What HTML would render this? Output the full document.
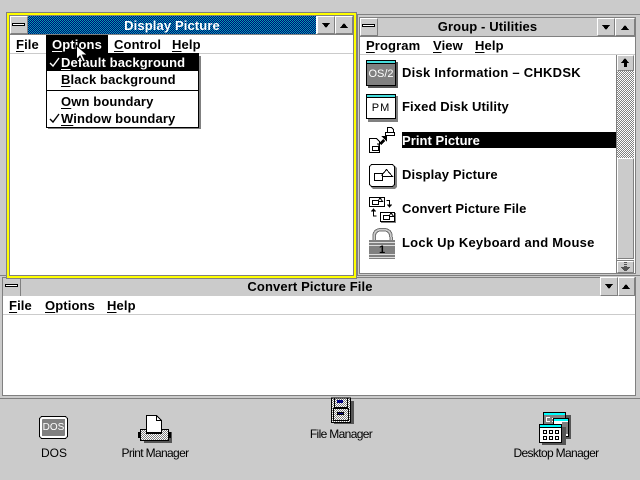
<!DOCTYPE html>
<html><head><meta charset="utf-8"><style>
html,body{margin:0;padding:0;background:#cbcbcb;width:640px;height:480px;overflow:hidden}
body{position:relative;font-family:"Liberation Sans",sans-serif}
.r{position:absolute}
.t{position:absolute;font:bold 13px/16px "Liberation Sans",sans-serif;letter-spacing:.12px;color:#000;white-space:pre;margin-top:1px}
.t u{text-underline-offset:2px;text-decoration-thickness:1px}
.l{position:absolute;font:12px/14px "Liberation Sans",sans-serif;letter-spacing:-.65px;color:#000;white-space:pre;text-align:center}
.btn{position:absolute;background:#cbcbcb;border-top:1px solid #fff;border-left:1px solid #fff;border-right:1px solid #808080;border-bottom:1px solid #808080;box-sizing:border-box}
svg{position:absolute;overflow:visible;shape-rendering:crispEdges}
.st{background:repeating-conic-gradient(#808080 0 25%,#fff 0 50%) 0 0/2px 2px}
</style></head><body>

<!-- Group window -->
<div class="r" style="left:357px;top:14px;width:285px;height:262px;background:#cbcbcb;border:1px solid #808080;box-sizing:border-box"></div>
<div class="r" style="left:359px;top:17px;width:277px;height:257px;background:#808080"></div>
<div class="r" style="left:360px;top:18px;width:275px;height:255px;background:#fff"></div>
<div class="r" style="left:360px;top:18px;width:275px;height:18px;background:#cbcbcb"></div>
<div class="btn" style="left:360px;top:18px;width:18px;height:18px"></div>
<div class="r" style="left:362px;top:24px;width:13px;height:3px;background:#fff;border:1px solid #000;box-sizing:border-box"></div>
<div class="t" style="left:378px;top:18px;width:219px;text-align:center;color:#000">Group - Utilities</div>
<div class="btn" style="left:597px;top:18px;width:18px;height:18px"></div>
<svg style="left:602px;top:25px" width="9" height="5"><path d="M0 0h8l-4 5z"/></svg>
<div class="btn" style="left:615px;top:18px;width:20px;height:18px"></div>
<svg style="left:621px;top:25px" width="9" height="5"><path d="M4 0l4 5H0z"/></svg>
<div class="r" style="left:360px;top:36px;width:275px;height:1px;background:#808080"></div>
<div class="r" style="left:360px;top:54px;width:275px;height:1px;background:#cbcbcb"></div>
<div class="t" style="left:366px;top:37px"><u>P</u>rogram</div>
<div class="t" style="left:433px;top:37px"><u>V</u>iew</div>
<div class="t" style="left:475px;top:37px"><u>H</u>elp</div>

<!-- Scrollbar -->
<div class="r" style="left:616px;top:55px;width:1px;height:218px;background:#808080"></div>
<div class="btn" style="left:617px;top:55px;width:17px;height:16px"></div>
<svg style="left:621px;top:58px" width="9" height="10"><path d="M4 0l4 5H6v4H3V5H0z"/></svg>
<div class="r st" style="left:617px;top:71px;width:17px;height:87px"></div>
<div class="btn" style="left:617px;top:158px;width:17px;height:101px"></div>
<div class="r" style="left:617px;top:260px;width:17px;height:1px;background:#808080"></div>
<div class="btn" style="left:617px;top:261px;width:17px;height:12px"></div>
<svg style="left:621px;top:262px" width="9" height="10"><path d="M3 0h3v1H3zM3 2h3v1H3zM3 4h3v1H3zM0 5h9v1H0zM1 6h7v1H1zM2 7h5v1H2zM3 8h3v1H3z" fill="#555"/></svg>

<!-- Program icons -->
<svg style="left:366px;top:60px" width="32" height="28">
<rect x="2" y="2" width="30" height="26" fill="#555"/>
<rect x="0" y="0" width="30" height="26" fill="#000"/><rect x="1" y="1" width="28" height="24" fill="#808080"/>
<rect x="1" y="1" width="28" height="2" fill="#44dddd"/><rect x="1" y="3" width="28" height="1" fill="#000"/>
</svg>
<div class="r" style="left:366px;top:67px;width:30px;text-align:center;font:11px/14px 'Liberation Sans',sans-serif;color:#fff">OS/2</div>
<svg style="left:366px;top:94px" width="32" height="28">
<rect x="2" y="2" width="30" height="26" fill="#808080"/>
<rect x="0" y="0" width="30" height="25" fill="#000"/><rect x="1" y="1" width="28" height="23" fill="#fff"/>
<rect x="1" y="1" width="28" height="2" fill="#44dddd"/><rect x="1" y="3" width="28" height="1" fill="#000"/>
</svg>
<div class="r" style="left:366px;top:101px;width:30px;text-align:center;font:11px/14px 'Liberation Sans',sans-serif;color:#000;letter-spacing:1px">PM</div>

<!-- Print Picture icon -->
<svg style="left:368px;top:126px" width="32" height="32">
<path d="M19.500 1.500h4l2 2v5h-6z" fill="#fff" stroke="#000"/>
<path d="M17.500 6.500h9v3h-9z" fill="#fff" stroke="#000"/>
<path d="M11 17l4-4 2 2-4 4zM13 10h6v6z" fill="#000"/>
<path d="M1.500 12.500h7l3 3v11h-10z" fill="#fff" stroke="#000"/>
<path d="M4.500 20.500h6v4h-6zM9 18h2v3" fill="#fff" stroke="#000"/>
</svg>
<!-- Display Picture icon -->
<svg style="left:369px;top:164px" width="30" height="27" shape-rendering="auto">
<rect x="2" y="2" width="26" height="23" rx="3" fill="#808080"/>
<rect x=".5" y=".5" width="25" height="22" rx="3" fill="#fff" stroke="#000"/>
<rect x="5.500" y="9.500" width="8" height="7" fill="#fff" stroke="#000"/>
<path d="M13.500 12.500h10l-6-7-5 6" fill="none" stroke="#000"/>
</svg>
<!-- Convert icon -->
<svg style="left:369px;top:197px" width="30" height="26">
<rect x=".5" y=".5" width="15" height="9" fill="#fff" stroke="#000"/>
<rect x="3.500" y="3.500" width="6" height="4" fill="#fff" stroke="#000"/><path d="M9.500 4.500h4l-2-3h-1l-1 2" fill="none" stroke="#000"/>
<rect x="11.500" y="15.500" width="14" height="9" fill="#fff" stroke="#000"/>
<rect x="14.500" y="18.500" width="6" height="4" fill="#fff" stroke="#000"/><path d="M20.500 19.500h4l-2-3h-1l-1 2" fill="none" stroke="#000"/>
<rect x="26" y="16" width="1" height="10" fill="#808080"/><rect x="12" y="25" width="15" height="1" fill="#808080"/>
<path d="M17.500 3.500h3v6M18 8h5M19 9h3M20 10h1M4.500 13v6h3M2 14h5M3 13h3M4 12h1" fill="none" stroke="#000"/>
</svg>
<!-- Lock icon -->
<svg style="left:369px;top:228px" width="28" height="32" shape-rendering="auto">
<path d="M5 13V9q0-7.500 8.500-7.500T22 9v4" fill="none" stroke="#000" stroke-width="3.500" opacity=".55"/>
<path d="M5 13V9q0-7.500 8.500-7.500T22 9v4" fill="none" stroke="#cbcbcb" stroke-width="1.500"/>
<rect x="0" y="12" width="26" height="19" fill="#808080"/>
<path d="M0 14.500h26M0 17.500h26M0 26.500h26M0 29.500h26" stroke="#ddd" stroke-width="1" fill="none"/>
<text x="13" y="25" font-family="Liberation Sans" font-weight="bold" font-size="11" text-anchor="middle">1</text>
</svg>

<div class="t" style="left:402px;top:64px;letter-spacing:.25px">Disk Information – CHKDSK</div>
<div class="t" style="left:402px;top:98px">Fixed Disk Utility</div>
<div class="r" style="left:402px;top:132px;width:214px;height:16px;background:#000"></div>
<div class="t" style="left:402px;top:132px;color:#fff;letter-spacing:.05px">Print Picture</div>
<div class="t" style="left:402px;top:166px">Display Picture</div>
<div class="t" style="left:402px;top:200px;letter-spacing:.08px">Convert Picture File</div>
<div class="t" style="left:402px;top:234px;letter-spacing:.24px">Lock Up Keyboard and Mouse</div>

<!-- Convert window -->
<div class="r" style="left:-2px;top:275px;width:644px;height:124px;background:#cbcbcb;border:1px solid #808080;box-sizing:border-box"></div>
<div class="r" style="left:2px;top:277px;width:634px;height:119px;background:#808080"></div>
<div class="r" style="left:3px;top:278px;width:632px;height:117px;background:#fff"></div>
<div class="r" style="left:3px;top:278px;width:632px;height:18px;background:#cbcbcb"></div>
<div class="r" style="left:3px;top:314px;width:632px;height:1px;background:#cbcbcb"></div>
<div class="r" style="left:20px;top:278px;width:1px;height:18px;background:#808080"></div>
<div class="r" style="left:5px;top:284px;width:13px;height:3px;background:#fff;border:1px solid #000;box-sizing:border-box"></div>
<div class="t" style="left:20px;top:278px;width:580px;text-align:center">Convert Picture File</div>
<div class="btn" style="left:600px;top:277px;width:18px;height:19px"></div>
<svg style="left:605px;top:284px" width="9" height="5"><path d="M0 0h8l-4 5z"/></svg>
<div class="btn" style="left:618px;top:277px;width:17px;height:19px"></div>
<svg style="left:622px;top:284px" width="9" height="5"><path d="M4 0l4 5H0z"/></svg>
<div class="t" style="left:9px;top:297px"><u>F</u>ile</div>
<div class="t" style="left:45px;top:297px"><u>O</u>ptions</div>
<div class="t" style="left:107px;top:297px"><u>H</u>elp</div>

<!-- Display Picture window -->
<div class="r" style="left:6px;top:12px;width:351px;height:267px;background:#808080"></div>
<div class="r" style="left:7px;top:13px;width:349px;height:265px;background:#ffff00"></div>
<div class="r" style="left:9px;top:15px;width:345px;height:261px;background:#808080"></div>
<div class="r" style="left:10px;top:16px;width:343px;height:259px;background:#fff"></div>
<div class="r" style="left:28px;top:16px;width:288px;height:18px;background:repeating-conic-gradient(#000080 0 25%,#00a8a8 0 50%) 0 0/2px 2px"></div>
<div class="btn" style="left:10px;top:16px;width:18px;height:18px"></div>
<div class="r" style="left:12px;top:23px;width:13px;height:3px;background:#fff;border:1px solid #000;box-sizing:border-box"></div>
<div class="t" style="left:28px;top:17px;width:288px;text-align:center;color:#fff">Display Picture</div>
<div class="btn" style="left:317px;top:16px;width:18px;height:18px"></div>
<svg style="left:322px;top:23px" width="9" height="5"><path d="M0 0h8l-4 5z" fill="#000"/></svg>
<div class="btn" style="left:335px;top:16px;width:18px;height:18px"></div>
<svg style="left:340px;top:23px" width="9" height="5"><path d="M4 0l4 5H0z" fill="#000"/></svg>
<div class="r" style="left:10px;top:34px;width:343px;height:1px;background:#808080"></div>
<div class="r" style="left:10px;top:53px;width:343px;height:1px;background:#cbcbcb"></div>
<div class="t" style="left:16px;top:36px"><u>F</u>ile</div>
<div class="r" style="left:46px;top:35px;width:62px;height:18px;background:#000"></div>
<div class="t" style="left:52px;top:36px;color:#fff"><u>O</u>ptions</div>
<div class="t" style="left:114px;top:36px"><u>C</u>ontrol</div>
<div class="t" style="left:172px;top:36px"><u>H</u>elp</div>

<!-- Menu -->
<div class="r" style="left:48px;top:56px;width:153px;height:73px;background:#808080"></div>
<div class="r" style="left:46px;top:53px;width:151px;height:73px;background:#fff;border:1px solid #000;box-sizing:content-box"></div>
<div class="r" style="left:47px;top:54px;width:151px;height:17px;background:#000"></div>
<div class="r" style="left:47px;top:90px;width:151px;height:1px;background:#000"></div>
<div class="t" style="left:61px;top:54px;color:#fff"><u>D</u>efault background</div>
<div class="t" style="left:61px;top:71px"><u>B</u>lack background</div>
<div class="t" style="left:61px;top:93px"><u>O</u>wn boundary</div>
<div class="t" style="left:61px;top:110px"><u>W</u>indow boundary</div>
<svg style="left:49px;top:58px" width="12" height="10"><path d="M1 5l3 3 6-8" fill="none" stroke="#fff" stroke-width="1.400" shape-rendering="auto"/></svg>
<svg style="left:49px;top:114px" width="12" height="10"><path d="M1 5l3 3 6-8" fill="none" stroke="#000" stroke-width="1.400" shape-rendering="auto"/></svg>
<!-- cursor -->
<svg style="left:76px;top:45px" width="13" height="18"><path d="M.5 .5v14l3.500-3.500 3 6 2.500-1-3-6h5z" fill="#fff" stroke="#000" stroke-width="1" shape-rendering="auto"/></svg>

<!-- Desktop icons -->
<svg style="left:39px;top:416px" width="32" height="24" shape-rendering="auto">
<rect x=".5" y=".5" width="28" height="22" rx="3" fill="#fff" stroke="#000"/>
<rect x="3" y="3" width="23" height="17" rx="1" fill="#808080"/>
</svg>
<div class="r" style="left:39px;top:421px;width:29px;text-align:center;font:10px/13px 'Liberation Sans',sans-serif;color:#fff">DOS</div>
<div class="l" style="left:14px;top:446px;width:80px;letter-spacing:0">DOS</div>

<svg style="left:138px;top:414px" width="36" height="30">
<defs><pattern id="s" width="2" height="2" patternUnits="userSpaceOnUse"><rect width="2" height="2" fill="#fff"/><rect width="1" height="1" fill="#808080"/><rect x="1" y="1" width="1" height="1" fill="#808080"/></pattern></defs>
<rect x="6" y="18" width="28" height="11" fill="#555"/>
<rect x="2.500" y="15.500" width="28" height="11" fill="url(#s)" stroke="#000"/>
<rect x="0" y="18" width="2" height="6" fill="#000"/><rect x="31" y="18" width="2" height="6" fill="#000"/>
<path d="M8.500 1.500h10l5 5v12h-15z" fill="#fff" stroke="#000"/>
<path d="M18.500 1.500v5h5" fill="none" stroke="#000"/>
<rect x="8" y="18" width="16" height="2" fill="#000"/>
</svg>
<div class="l" style="left:105px;top:446px;width:100px">Print Manager</div>

<svg style="left:331px;top:399px" width="23" height="26">
<rect x="3" y="2" width="20" height="23" fill="#555"/>
<rect x=".5" y="-1" width="19" height="24.500" fill="url(#s)" stroke="#000"/>
<path d="M3.500 -1v9.500h13V-1" fill="none" stroke="#000"/>
<rect x="2.500" y="9.500" width="15" height="12" fill="url(#s)" stroke="#000"/>
<rect x="6" y="1" width="6" height="3" fill="#000080"/><rect x="6.500" y="13.500" width="6" height="2" fill="#000080" stroke="#000"/>
</svg>
<div class="l" style="left:291px;top:427px;width:100px">File Manager</div>

<svg style="left:539px;top:412px" width="32" height="34">
<rect x="14" y="3" width="18" height="24" fill="#555"/>
<rect x="4.500" y=".5" width="22" height="14" fill="#808080" stroke="#000"/><rect x="5" y="1" width="21" height="2" fill="#0ff"/>
<path d="M7 5h4v1H7zM7 6h1v3H7zM7 9h4v1H7zM13 6h2v1h-2zM13 9h2v1h-2z" fill="#fff"/>
<rect x="14.500" y="6.500" width="15" height="18" fill="#fff" stroke="#000"/><rect x="15" y="7" width="14" height="2" fill="#0ff"/>
<path d="M23 11h6M23 13h6M23 15h6M23 17h6M23 19h6M23 21h6" stroke="#000"/>
<rect x="3" y="15" width="24" height="18" fill="#555"/>
<rect x=".5" y="12.500" width="22" height="18" fill="#fff" stroke="#000"/><rect x="1" y="13" width="21" height="2" fill="#0ff"/><rect x="1" y="15" width="21" height="1" fill="#000"/>
<path d="M4.500 18.500h3v3h-3zM10.500 18.500h3v3h-3zM16.500 18.500h3v3h-3zM4.500 24.500h3v3h-3zM10.500 24.500h3v3h-3zM16.500 24.500h3v3h-3z" fill="none" stroke="#000"/>
</svg>
<div class="l" style="left:506px;top:446px;width:100px">Desktop Manager</div>

</body></html>
